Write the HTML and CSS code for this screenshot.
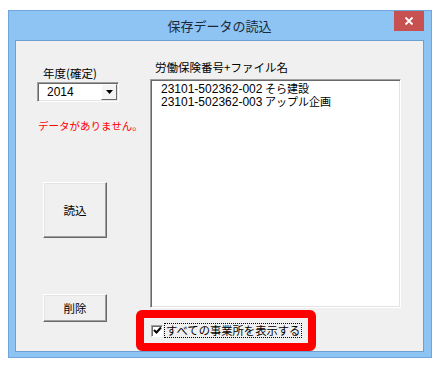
FILE: index.html
```html
<!DOCTYPE html>
<html lang="ja">
<head>
  <meta charset="UTF-8" />
  <title>保存データの読込</title>
  <link rel="stylesheet" href="styles.css">
</head>
<body>
  <div class="window">
    <div class="titlebar">
      <span class="title">保存データの読込</span>
      <button class="close" title="閉じる">
        <svg width="10" height="10" viewBox="0 0 10 10"><path d="M1.5 1.5 L8.5 8.5 M8.5 1.5 L1.5 8.5" stroke="#fff" stroke-width="1.8" fill="none"/></svg>
      </button>
    </div>

    <div class="client">
      <!-- 左側：年度と操作ボタン -->
      <div class="left">
        <div class="label label-year">年度(確定)</div>
        <div class="combo">
          <span class="combo-value">2014</span>
          <span class="combo-btn">
            <svg width="7" height="4" viewBox="0 0 7 4"><path d="M0 0 H7 L3.5 4 Z" fill="#000"/></svg>
          </span>
        </div>
        <div class="message">データがありません。</div>
        <button class="btn btn-load">読込</button>
        <button class="btn btn-delete">削除</button>
      </div>

      <!-- 右側：ファイル一覧 -->
      <div class="right">
        <div class="label label-list">労働保険番号+ファイル名</div>
        <div class="listbox">
          <div class="item"><span class="num">23101-502362-002</span> そら建設</div>
          <div class="item"><span class="num">23101-502362-003</span> アップル企画</div>
        </div>
        <div class="highlight">
          <label class="check">
            <span class="checkbox">
              <svg width="9" height="9" viewBox="0 0 9 9"><path d="M1 4 L3.5 6.5 L8 1.5" stroke="#000" stroke-width="2" fill="none"/></svg>
            </span>
            <span class="check-text">すべての事業所を表示する</span>
          </label>
        </div>
      </div>
    </div>
  </div>
</body>
</html>
```

FILE: styles.css
```css
body {
  margin: 0;
  background: #fff;
  font-family: "Noto Sans CJK JP", sans-serif;
  font-size: 11px;
  color: #000;
}

.window {
  box-sizing: border-box;
  width: 424px;
  height: 348px;
  margin: 10px 0 0 8px;
  padding: 0 7px 5px 6px;
  background: #8ec4f4;
  border: 1px solid #6ea6dc;
  display: flex;
  flex-direction: column;
}

.titlebar {
  height: 29px;
  display: grid;
  grid-template-columns: 1fr auto 1fr;
}
.title {
  grid-column: 2;
  align-self: center;
  font-size: 13px;
  color: #1a2a3a;
  line-height: 29px;
}
.close {
  grid-column: 3;
  justify-self: end;
  align-self: start;
  width: 30px;
  height: 20px;
  padding: 0;
  border: none;
  background: #c75050;
  display: flex;
  align-items: center;
  justify-content: center;
}

.client {
  box-sizing: border-box;
  height: 312px;
  background: #f0f0f0;
  border: 1px solid #6c9fd2;
  display: flex;
}

.label { height: 14px; line-height: 14px; white-space: nowrap; font-size: 11.5px; }

/* 左側 */
.left {
  width: 113px;
  margin-left: 21px;
  padding-top: 25px;
  display: flex;
  flex-direction: column;
  align-items: flex-start;
}
.label-year { margin-left: 6px; }

.combo {
  box-sizing: border-box;
  width: 82px;
  height: 20px;
  margin-top: 2px;
  background: #fff;
  border: 1px solid;
  border-color: #a0a0a0 #fff #fff #a0a0a0;
  box-shadow: inset 1px 1px #696969, inset -1px -1px #e3e3e3;
  display: flex;
  align-items: center;
  padding: 1px 1px 1px 9px;
}
.combo-value {
  flex: 1;
  font-family: "Liberation Sans Narrow", "Liberation Sans", sans-serif;
  font-size: 12px;
}
.combo-btn {
  box-sizing: border-box;
  width: 16px;
  height: 16px;
  background: #f4f4f4;
  border: 1px solid;
  border-color: #fff #696969 #696969 #fff;
  display: flex;
  align-items: center;
  justify-content: center;
}

.message {
  margin-top: 17px;
  margin-left: 1px;
  color: #f00;
  line-height: 14px;
  font-size: 10.5px;
  white-space: nowrap;
}

.btn {
  box-sizing: border-box;
  width: 64px;
  margin-left: 6px;
  padding: 0;
  background: #f0f0f0;
  font-family: inherit;
  font-size: 11.5px;
  border: 1px solid;
  border-color: #fff #696969 #696969 #fff;
  box-shadow: inset -1px -1px #a0a0a0, inset 1px 1px #e3e3e3;
}
.btn-load { height: 56px; margin-top: 49px; }
.btn-delete { height: 28px; margin-top: 56px; }

/* 右側 */
.right {
  padding-top: 19px;
  display: flex;
  flex-direction: column;
  align-items: flex-start;
}
.label-list { margin-left: 5px; }

.listbox {
  box-sizing: border-box;
  width: 251px;
  height: 230px;
  margin-top: 5px;
  padding: 2px 10px;
  background: #fff;
  border: 1px solid;
  border-color: #a0a0a0 #fff #fff #a0a0a0;
  box-shadow: inset 1px 1px #696969, inset -1px -1px #e3e3e3;
}
.item { height: 13px; line-height: 13px; white-space: nowrap; }
.num { font-family: "Liberation Sans Narrow", "Liberation Sans", sans-serif; font-size: 12px; }

.highlight {
  box-sizing: border-box;
  width: 180px;
  height: 41px;
  margin-top: 2px;
  margin-left: -14px;
  border: 8px solid #fe0000;
  border-radius: 6px;
  display: flex;
  align-items: center;
  padding-left: 7px;
}
.check {
  display: flex;
  align-items: center;
  gap: 1px;
}
.checkbox {
  box-sizing: border-box;
  width: 12px;
  height: 12px;
  background: #fff;
  border: 1px solid;
  border-color: #a0a0a0 #fff #fff #a0a0a0;
  box-shadow: inset 1px 1px #696969;
  display: flex;
  align-items: center;
  justify-content: center;
}
.check-text {
  padding: 0 1px;
  line-height: 13px;
  font-size: 11.3px;
  border: 1px dotted #000;
  white-space: nowrap;
}
```
